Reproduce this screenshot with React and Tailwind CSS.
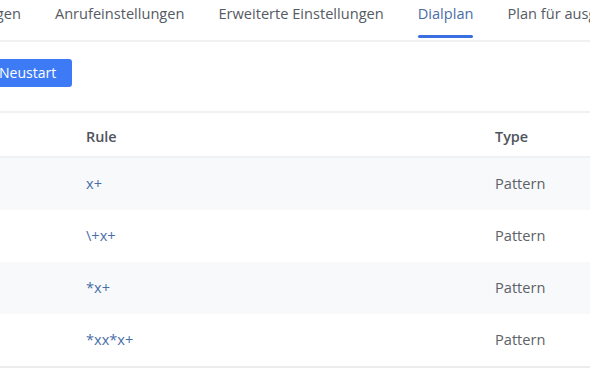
import React from "react";

const tabs = [
  { label: "Grundeinstellungen" },
  { label: "Anrufeinstellungen" },
  { label: "Erweiterte Einstellungen" },
  { label: "Dialplan", active: true },
  { label: "Plan für ausgehende Anrufe" },
];

const rows = [
  { rule: "x+", type: "Pattern" },
  { rule: "\\+x+", type: "Pattern" },
  { rule: "*x+", type: "Pattern" },
  { rule: "*xx*x+", type: "Pattern" },
];

export default function App() {
  return (
    <div
      className="w-[590px] h-[369px] overflow-hidden bg-white"
      style={{ fontFamily: '"Open Sans", "Noto Sans", sans-serif' }}
    >
      <div className="h-[42px] border-b-2 border-[#f0f1f3] overflow-hidden">
        <div className="flex gap-[34px] ml-[-114px] whitespace-nowrap">
          {tabs.map((t) => (
            <div key={t.label} className="relative h-[40px] flex-none">
              <div
                className={
                  "pt-[2px] text-[14.6px] leading-[22px] " +
                  (t.active ? "text-[#4a6ea8]" : "text-[#555a63]")
                }
              >
                {t.label}
              </div>
              {t.active && (
                <div className="absolute left-0 right-0 top-[35px] h-[3px] rounded-full bg-[#3a6fe0]" />
              )}
            </div>
          ))}
        </div>
      </div>

      <div className="h-[71px] flex items-start pt-[17px] border-b-2 border-[#f0f1f3]">
        <button className="ml-[-17px] h-[28px] pl-[16px] pr-[16px] rounded-[3px] bg-[#3d7bf6] text-white text-[14px] leading-[28px]">
          Neustart
        </button>
      </div>

      <div className="w-full">
        <div className="flex h-[45px] pt-[4px] items-center border-b-2 border-[#f0f1f3] text-[14.4px] font-semibold text-[#50545c]">
          <div className="w-[86px] flex-none" />
          <div className="w-[409px] flex-none">Rule</div>
          <div className="flex-1">Type</div>
        </div>
        {rows.map((r, i) => (
          <div
            key={i}
            className={
              "flex h-[52px] items-center text-[14.6px] " +
              (i % 2 === 0 ? "bg-[#f8f9fb]" : "bg-white")
            }
          >
            <div className="w-[86px] flex-none" />
            <div className="w-[409px] flex-none text-[#4a6ea8]">{r.rule}</div>
            <div className="flex-1 text-[#5d6168]">{r.type}</div>
          </div>
        ))}
        <div className="h-[2px] bg-[#ececef]" />
      </div>
    </div>
  );
}
